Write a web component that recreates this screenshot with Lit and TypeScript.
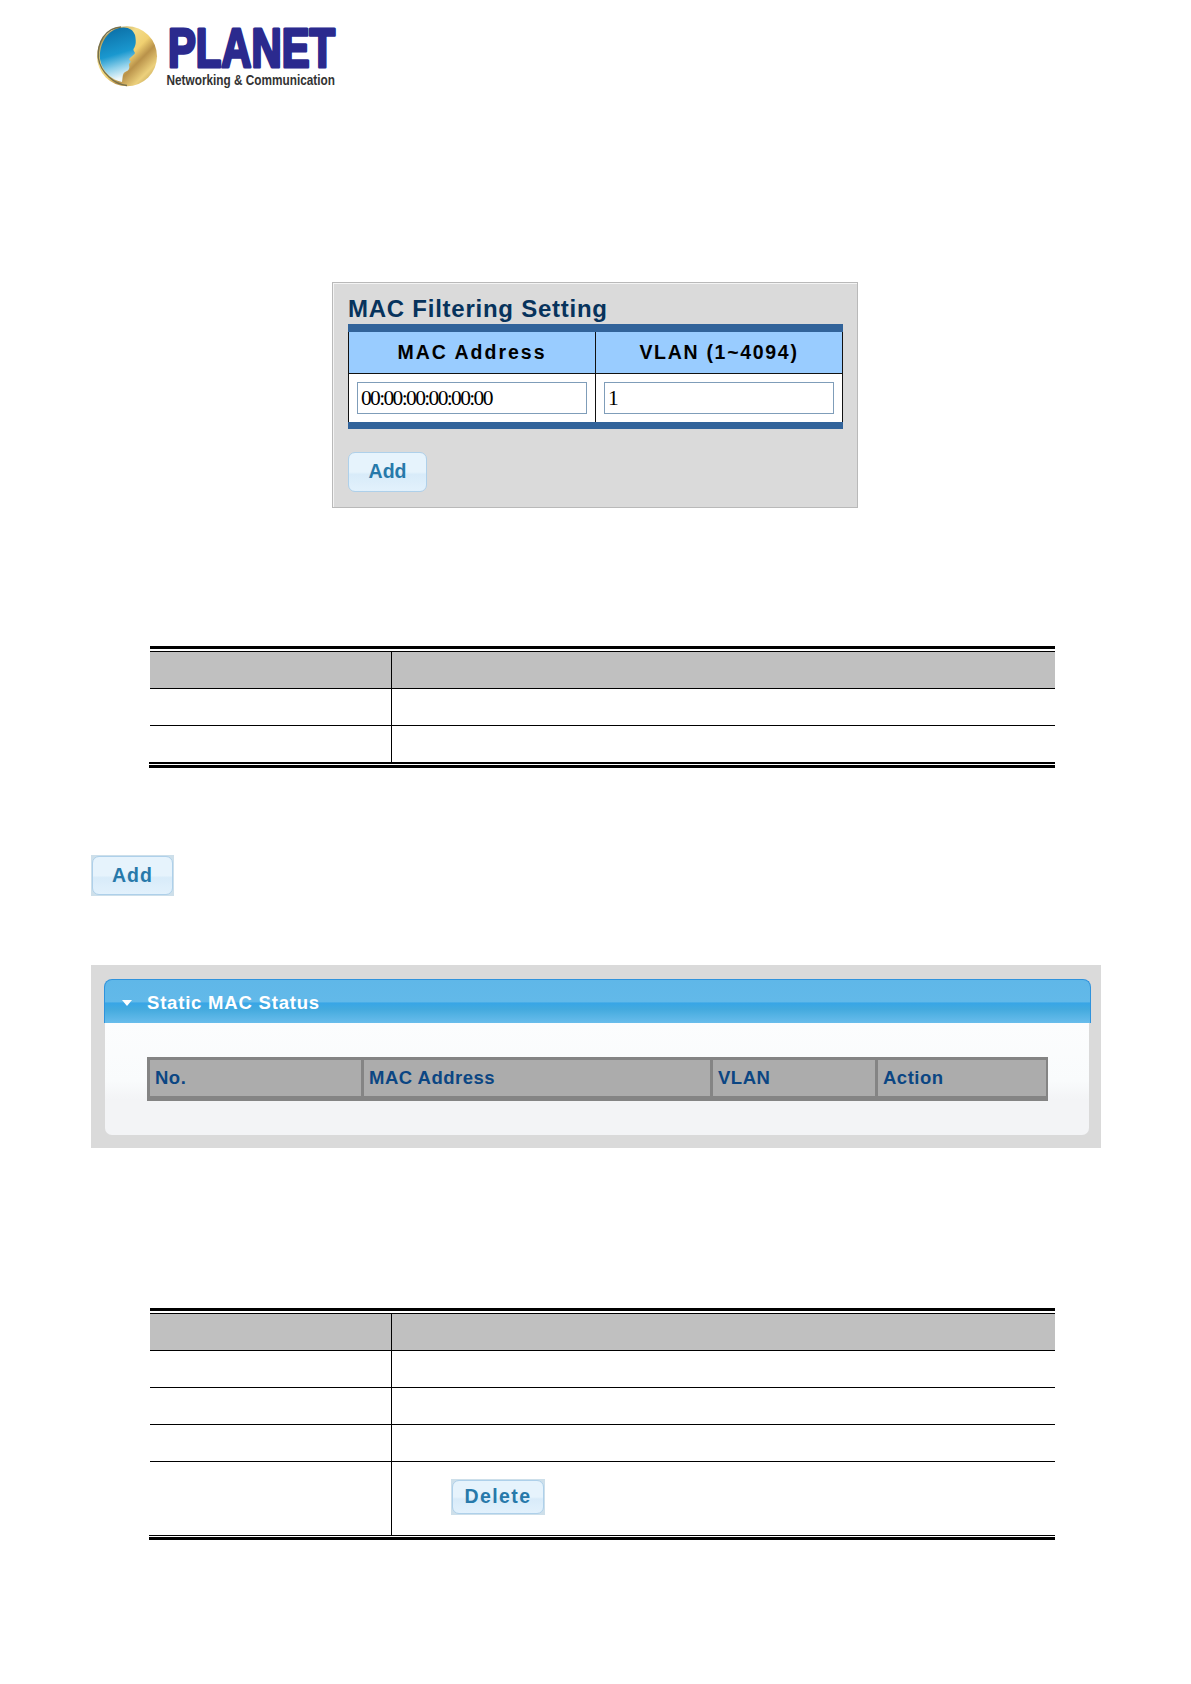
import {LitElement, css, html, svg} from 'lit';
import {customElement, property} from 'lit/decorators.js';
import {classMap} from 'lit/directives/class-map.js';

const StatusColumns = ['No.', 'MAC Address', 'VLAN', 'Action'];

@customElement('planet-logo')
export class PlanetLogo extends LitElement {
  static styles = css`
    :host {
      display: block;
      width: 265px;
      height: 85px;
    }

    svg {
      display: block;
      overflow: visible;
    }

    .brand {
      font: bold 55px 'Liberation Sans', Arial, sans-serif;
      fill: #2b2a8e;
      stroke: #2b2a8e;
      stroke-width: 3.2px;
      stroke-linejoin: round;
    }

    .tagline {
      font: bold 14.5px 'Liberation Sans', Arial, sans-serif;
      fill: #333;
    }
  `;

  renderGlobe() {
    return svg`
      <defs>
        <linearGradient id="gold" x1="0" y1="0" x2="1" y2="1">
          <stop offset="0" stop-color="#8d7434" />
          <stop offset="0.35" stop-color="#f3dc8a" />
          <stop offset="0.52" stop-color="#f0d071" />
          <stop offset="0.64" stop-color="#b9924a" />
          <stop offset="0.8" stop-color="#ecd07c" />
          <stop offset="1" stop-color="#a88a45" />
        </linearGradient>
        <linearGradient id="sea" x1="0.3" y1="0" x2="0.5" y2="1">
          <stop offset="0" stop-color="#0b6ea6" />
          <stop offset="0.5" stop-color="#1a98cf" />
          <stop offset="0.74" stop-color="#8fd0ea" />
          <stop offset="0.95" stop-color="#eef8fb" />
        </linearGradient>
      </defs>
      <circle cx="42" cy="41.3" r="30" fill="url(#gold)" />
      <path
        d="M34 13 C42 11 48 14 50 20 C51 25 51.500 30 48.500 34 C48 36.500 51 37 49.500 39 L44.500 43.500 C43.500 45 46 45.500 45.500 47 C45 48.500 43.500 48.500 44 50 C45 53 44 55.500 41 56.500 C37 58 38 62 37 67 C27 65 17 57 15 44 C14 29 22 16 34 13 Z"
        fill="url(#sea)"
      />
      <path
        d="M36 12 C20 13 12 28 13.400 43 C15.500 58 30 69.500 42 70.500"
        fill="none"
        stroke="#77704c"
        stroke-width="1.400"
      />
    `;
  }

  render() {
    return html`<svg width="265" height="85" viewBox="0 0 265 85">
      ${this.renderGlobe()}
      <text
        class="brand"
        x="83"
        y="51.500"
        textLength="167"
        lengthAdjust="spacingAndGlyphs"
      >
        PLANET
      </text>
      <text
        class="tagline"
        x="81.500"
        y="69.500"
        textLength="168.500"
        lengthAdjust="spacingAndGlyphs"
      >
        Networking &amp; Communication
      </text>
    </svg>`;
  }
}

@customElement('ui-button')
export class UiButton extends LitElement {
  @property()
  label = '';

  static styles = css`
    :host {
      display: flex;
    }

    button {
      flex: 1;
      padding: 0 0 1px;
      border: 1px solid #aed0ea;
      border-radius: 7px;
      background: linear-gradient(#e6f3fc 0 50%, #d8ebf9 56%, #e2f1fc);
      color: #2779aa;
      font: bold 19.5px 'Liberation Sans', Arial, sans-serif;
      letter-spacing: inherit;
    }
  `;

  render() {
    return html`<button>${this.label}</button>`;
  }
}

@customElement('doc-table')
export class DocTable extends LitElement {
  @property({type: Number})
  rows = 2;

  @property({type: Boolean})
  action = false;

  static styles = css`
    :host {
      display: block;
      width: 906px;
    }

    .head-rule {
      height: 3px;
      margin: 0 0 2px 1px;
      background: #000;
    }

    .row {
      display: grid;
      grid-template-columns: 241px 1fr;
      height: 36px;
      margin-left: 1px;
      border-top: 1px solid #000;
    }

    .row.head {
      background: #c0c0c0;
    }

    .row.tall {
      height: 73px;
    }

    .value {
      border-left: 1px solid #000;
    }

    .value ui-button {
      width: 92px;
      height: 34px;
      margin: 17px 0 0 59px;
      border: 1px solid #cddfea;
      background: #cddfea;
      letter-spacing: 1.4px;
    }

    .foot-rule {
      height: 1px;
      border-top: 2px solid #000;
      border-bottom: 3px solid #000;
    }

    .foot-rule.thin {
      border-top-width: 1px;
    }
  `;

  renderRow(index: number) {
    const hasAction = this.action && index === this.rows;
    return html`<div
      class=${classMap({row: true, head: index === 0, tall: hasAction})}
    >
      <div></div>
      <div class="value">
        ${hasAction ? html`<ui-button label="Delete"></ui-button>` : ''}
      </div>
    </div>`;
  }

  render() {
    return html`
      <div class="head-rule"></div>
      ${Array.from({length: this.rows + 1}, (_, i) => this.renderRow(i))}
      <div class=${classMap({'foot-rule': true, thin: this.action})}></div>
    `;
  }
}

@customElement('mac-filter-form')
export class MacFilterForm extends LitElement {
  static styles = css`
    :host {
      display: block;
      box-sizing: border-box;
      width: 526px;
      height: 226px;
      padding: 8px 14px 0 15px;
      border: 1px solid #b9b9b9;
      box-shadow: inset 1px 1px #f4f4f4;
      background: #dadada;
      font-family: 'Liberation Sans', Arial, sans-serif;
    }

    h2 {
      height: 33px;
      margin: 0;
      color: #07335c;
      font-size: 24px;
      line-height: 35px;
      letter-spacing: 0.75px;
      white-space: nowrap;
    }

    .fields {
      display: grid;
      grid-template-columns: 247px 248px;
      width: 495px;
      box-sizing: border-box;
      border-top: 8px solid #31639a;
      border-bottom: 7px solid #31639a;
    }

    .label,
    .field {
      border-left: 1px solid #111;
      box-sizing: border-box;
    }

    .last {
      border-right: 1px solid #111;
    }

    .label {
      height: 42px;
      border-bottom: 1px solid #111;
      background: #9cf;
      text-align: center;
      font-size: 19.5px;
      font-weight: bold;
      line-height: 40px;
      letter-spacing: 2px;
    }

    .label.last {
      letter-spacing: 1.7px;
    }

    .field {
      height: 48px;
      padding: 8px 8px 0;
      background: #fff;
    }

    input {
      display: block;
      box-sizing: border-box;
      width: 230px;
      height: 32px;
      margin: 0;
      padding: 0 3px;
      border: 1px solid #7f9db9;
      outline: none;
      background: #fff;
      color: #000;
      font: 21.5px 'Liberation Serif', 'Times New Roman', serif;
      letter-spacing: -1.65px;
    }

    ui-button {
      width: 79px;
      height: 40px;
      margin-top: 23px;
    }
  `;

  render() {
    return html`
      <h2>MAC Filtering Setting</h2>
      <div class="fields">
        <div class="label">MAC Address</div>
        <div class="label last">VLAN (1~4094)</div>
        <div class="field"><input value="00:00:00:00:00:00" /></div>
        <div class="field last"><input value="1" /></div>
      </div>
      <ui-button label="Add"></ui-button>
    `;
  }
}

@customElement('mac-status')
export class MacStatus extends LitElement {
  static styles = css`
    :host {
      display: block;
      box-sizing: border-box;
      width: 1010px;
      height: 183px;
      padding: 14px 10px 0 13px;
      background: #dadada;
      font: bold 18.5px 'Liberation Sans', Arial, sans-serif;
    }

    .header {
      display: flex;
      align-items: center;
      gap: 15px;
      height: 44px;
      box-sizing: border-box;
      padding: 2px 0 0 17px;
      border: 1px solid #2f93dc;
      border-bottom: none;
      border-radius: 8px 8px 0 0;
      background: linear-gradient(
        #5fb7e8 0,
        #62b9e9 50%,
        #38a6e6 54%,
        #44aade 68%,
        #69bdec
      );
      color: #fff;
      letter-spacing: 0.8px;
    }

    .arrow {
      border: 5.5px solid transparent;
      border-top: 6px solid #fff;
      border-bottom: 0;
    }

    .content {
      height: 112px;
      box-sizing: border-box;
      margin: 0 2px 0 1px;
      padding: 34px 41px 0 42px;
      border-radius: 0 0 7px 7px;
      background: linear-gradient(#fcfdfe 0, #f9fbfc 52%, #f3f4f6 68%);
    }

    .columns {
      display: grid;
      grid-template-columns: 211px 346px 162px 168px;
      gap: 3px;
      padding: 3px 2px 5px 3px;
      background: #848484;
      color: #0b4683;
      letter-spacing: 0.5px;
    }

    .column {
      height: 36px;
      box-sizing: border-box;
      padding-left: 5px;
      background: #acacac;
      line-height: 35px;
    }
  `;

  render() {
    return html`
      <div class="header">
        <span class="arrow"></span>
        <span>Static MAC Status</span>
      </div>
      <div class="content">
        <div class="columns">
          ${StatusColumns.map(
            (name) => html`<div class="column">${name}</div>`
          )}
        </div>
      </div>
    `;
  }
}

@customElement('app-root')
export class AppRoot extends LitElement {
  static styles = css`
    :host {
      display: flex;
      flex-direction: column;
      align-items: flex-start;
      box-sizing: border-box;
      width: 1191px;
      height: 1684px;
      padding-top: 15px;
      overflow: hidden;
      background: #fff;
    }

    planet-logo {
      margin-left: 85px;
    }

    mac-filter-form {
      margin: 182px 0 0 332px;
    }

    .settings {
      margin: 138px 0 0 149px;
    }

    .add {
      width: 81px;
      height: 39px;
      margin: 87px 0 0 91px;
      border: 1px solid #cddfea;
      background: #cddfea;
      letter-spacing: 1.1px;
    }

    mac-status {
      margin: 69px 0 0 91px;
    }

    .statuses {
      margin: 160px 0 0 149px;
    }
  `;

  render() {
    return html`
      <planet-logo></planet-logo>
      <mac-filter-form></mac-filter-form>
      <doc-table class="settings" rows="2"></doc-table>
      <ui-button class="add" label="Add"></ui-button>
      <mac-status></mac-status>
      <doc-table class="statuses" rows="4" action></doc-table>
    `;
  }
}
